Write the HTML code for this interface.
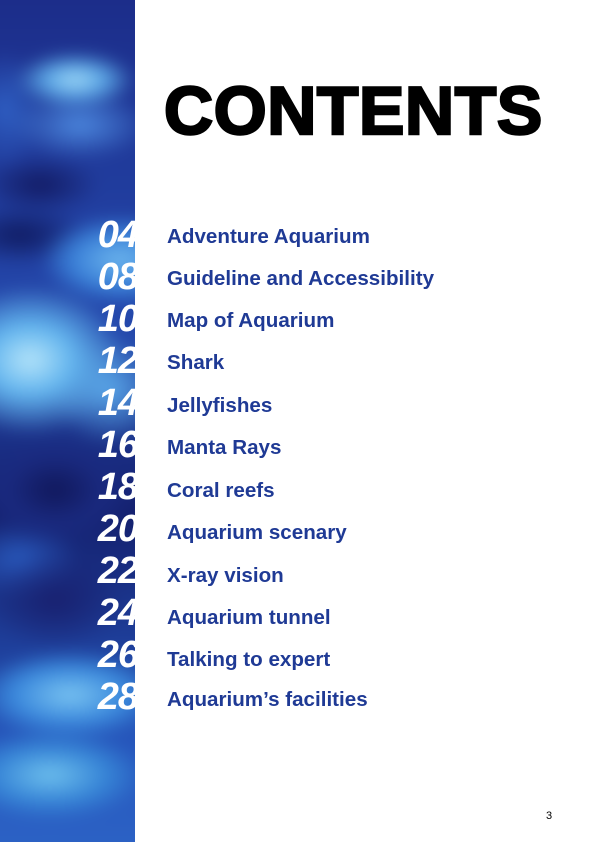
<!DOCTYPE html>
<html><head><meta charset="utf-8"><style>
html,body{margin:0;padding:0;background:#fff}
body{width:595px;height:842px;position:relative;overflow:hidden;font-family:"Liberation Sans",sans-serif}
#strip{position:absolute;left:0;top:0;width:135px;height:842px;overflow:hidden;background:#1c2f8c}
#bg{position:absolute;left:-40px;top:-40px;width:215px;height:922px;filter:blur(8px);
background:
radial-gradient(ellipse 60px 28px at 115px 120px,#a8dcf6 0%,#5aa6e6 50%,transparent 100%),
radial-gradient(ellipse 70px 35px at 120px 165px,#4d8ae0 0%,transparent 100%),
radial-gradient(ellipse 40px 60px at 45px 150px,#2f60c4 0%,transparent 100%),
radial-gradient(ellipse 60px 30px at 80px 225px,#121a62 0%,transparent 100%),
radial-gradient(ellipse 80px 45px at 160px 300px,#6fb8ee 0%,#3a80d8 60%,transparent 100%),
radial-gradient(ellipse 95px 75px at 70px 400px,#b8e6fa 0%,#62b4ee 45%,transparent 100%),
radial-gradient(ellipse 60px 55px at 150px 430px,#5aa8ea 0%,transparent 100%),
radial-gradient(ellipse 70px 30px at 60px 275px,#0f1a60 0%,transparent 100%),
radial-gradient(ellipse 80px 55px at 95px 530px,#10175a 0%,#1a2a80 60%,transparent 100%),
radial-gradient(ellipse 70px 50px at 95px 640px,#18206f 0%,transparent 100%),
radial-gradient(ellipse 95px 45px at 110px 735px,#7cc6f2 0%,#3a88dc 60%,transparent 100%),
radial-gradient(ellipse 95px 45px at 90px 815px,#70c2ee 0%,#3684d6 60%,transparent 100%),
radial-gradient(ellipse 60px 40px at 60px 600px,#2a5cc0 0%,transparent 100%),
linear-gradient(#1b2a86,#2448ac 40%,#14206e 60%,#2656bc 85%,#2e66c8)}
.num{position:absolute;right:-3px;color:#fff;font-weight:bold;font-style:italic;font-size:38px;letter-spacing:-1px;line-height:1;text-align:right}
h1{position:absolute;left:164px;top:77px;margin:0;font-size:68px;font-weight:900;color:#000;letter-spacing:0.6px;line-height:1;-webkit-text-stroke:2.5px #000}
.it{position:absolute;left:167px;color:#1f3a95;font-weight:bold;font-size:20.6px;line-height:1}
.pg{position:absolute;left:546px;top:810px;font-size:11px;color:#000}
</style></head><body>
<div id="strip"><div id="bg"></div>
<div class="num" style="top:216px">04</div>
<div class="num" style="top:258px">08</div>
<div class="num" style="top:300px">10</div>
<div class="num" style="top:342px">12</div>
<div class="num" style="top:384px">14</div>
<div class="num" style="top:426px">16</div>
<div class="num" style="top:468px">18</div>
<div class="num" style="top:510px">20</div>
<div class="num" style="top:552px">22</div>
<div class="num" style="top:594px">24</div>
<div class="num" style="top:636px">26</div>
<div class="num" style="top:678px">28</div>
</div>
<h1>CONTENTS</h1>
<div class="it" style="top:227px">Adventure Aquarium</div>
<div class="it" style="top:269px">Guideline and Accessibility</div>
<div class="it" style="top:311px">Map of Aquarium</div>
<div class="it" style="top:353px">Shark</div>
<div class="it" style="top:396px">Jellyfishes</div>
<div class="it" style="top:438px">Manta Rays</div>
<div class="it" style="top:481px">Coral reefs</div>
<div class="it" style="top:523px">Aquarium scenary</div>
<div class="it" style="top:566px">X-ray vision</div>
<div class="it" style="top:608px">Aquarium tunnel</div>
<div class="it" style="top:650px">Talking to expert</div>
<div class="it" style="top:690px">Aquarium’s facilities</div>
<div class="pg">3</div>
</body></html>
